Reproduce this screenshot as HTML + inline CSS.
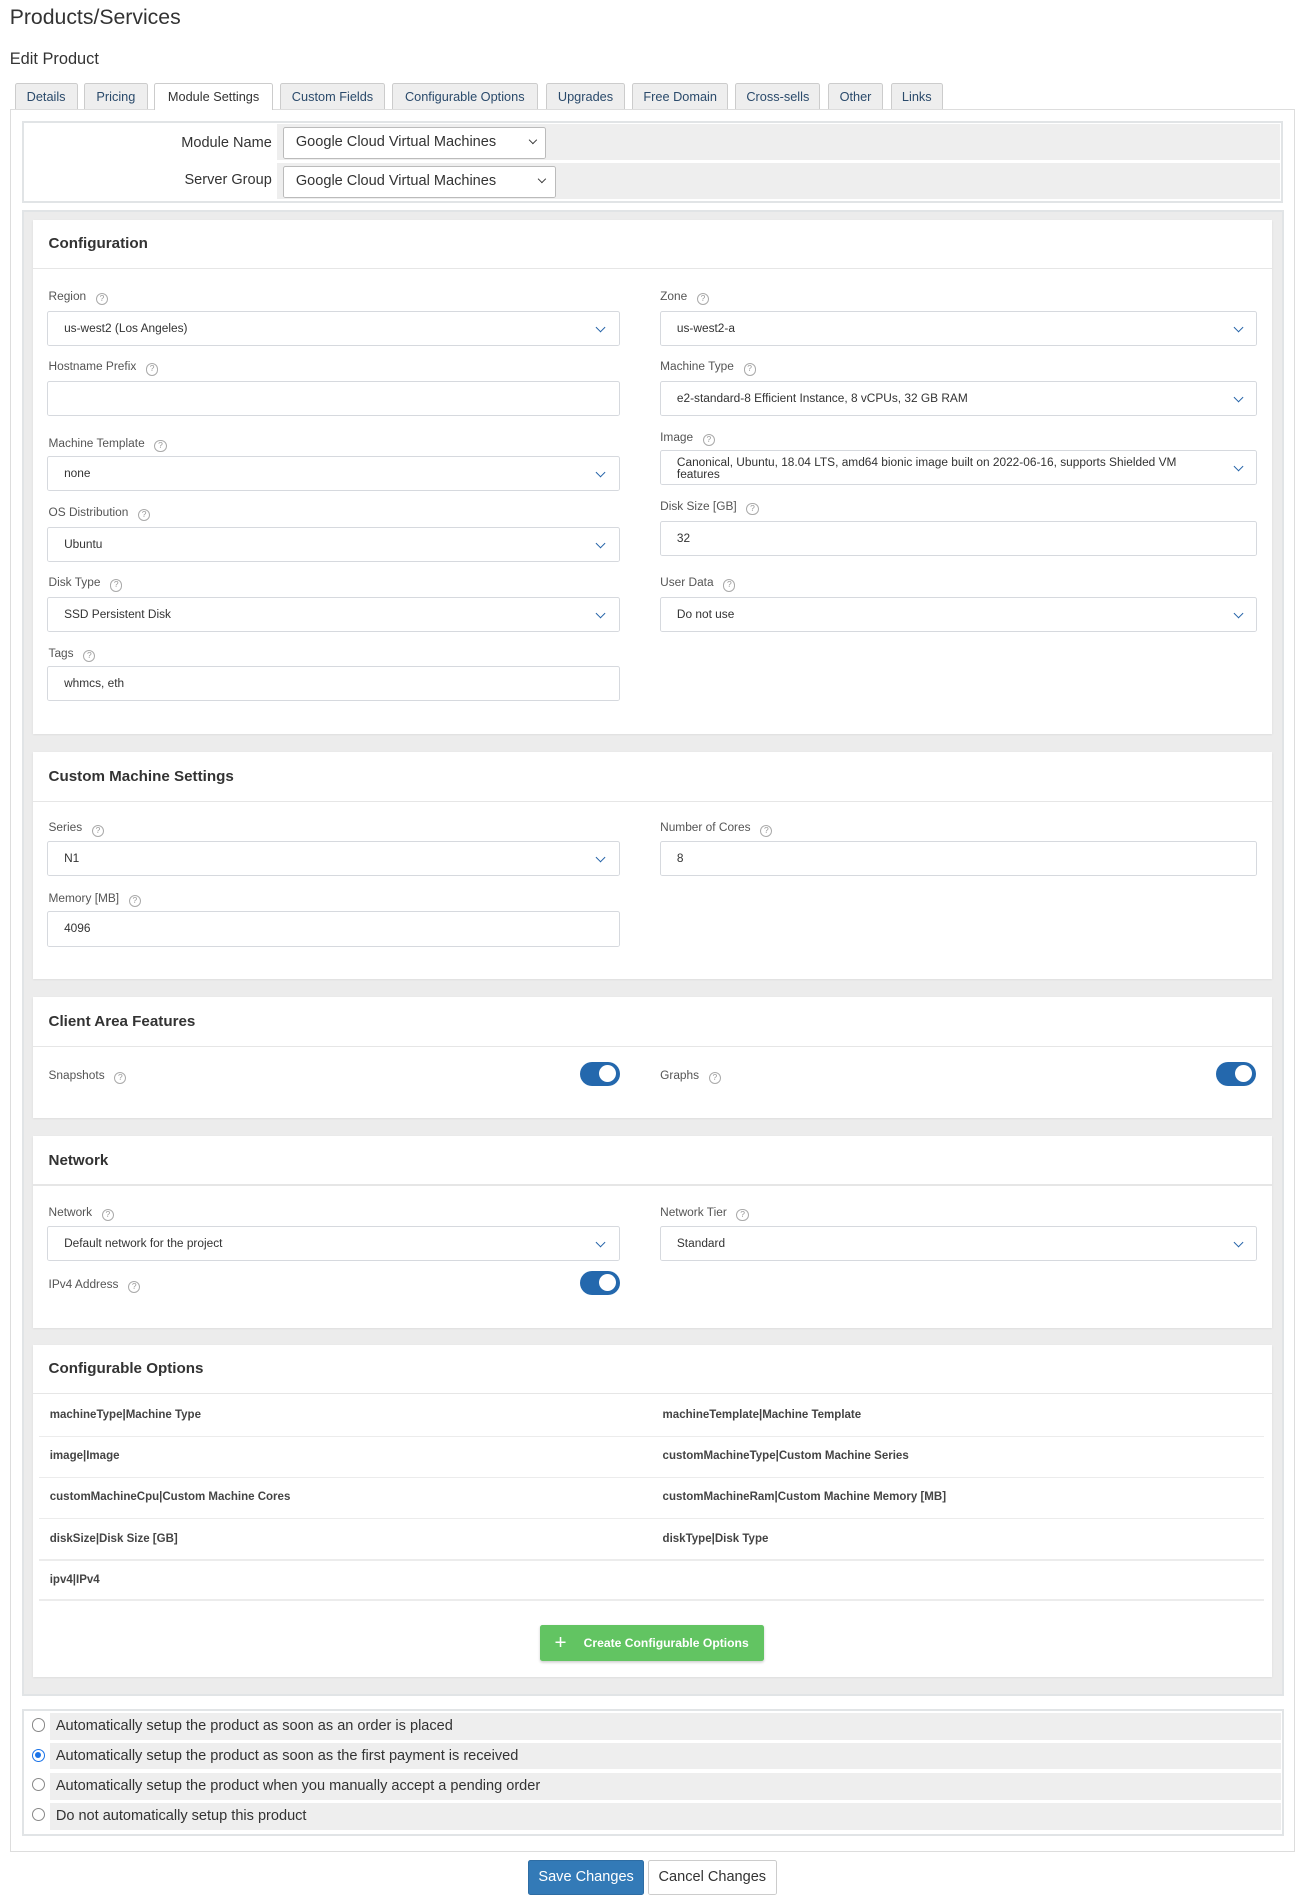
<!DOCTYPE html>
<html><head><meta charset="utf-8"><style>
*{box-sizing:border-box;margin:0;padding:0}
html,body{width:1306px;height:1902px;overflow:hidden;background:#fff}
#w{zoom:1.2135;position:relative;width:1080px;height:1573px;font-family:"Liberation Sans",sans-serif;color:#333}
.a{position:absolute}
.tab{position:absolute;top:68px;height:22px;border:1px solid #ccc;border-bottom:none;background:#eee;font-size:10.5px;color:#2a4a6b;text-align:center;line-height:21px;border-radius:2px 2px 0 0}
.tab.on{background:#fff;color:#333;height:23px}
.card{position:absolute;left:27px;width:1021px;background:#fff;box-shadow:0 1px 2px rgba(0,0,0,.08)}
.card h3{position:absolute;left:13px;font-size:12.5px;font-weight:bold;color:#333;top:13px}
.card .hr{position:absolute;left:0;right:0;height:1px;background:#e6e6e6;top:40px}
.lb{position:absolute;font-size:9.8px;color:#555;white-space:nowrap;margin-top:1px}
.q{display:inline-block;width:10px;height:10px;border:1px solid #aaa;border-radius:50%;font-size:7px;line-height:8px;text-align:center;color:#999;margin-left:8px;vertical-align:-1px}
.in{position:absolute;height:29px;border:1px solid #d6d9de;border-radius:2px;font-size:9.8px;color:#333;padding-left:13px;line-height:27px;white-space:nowrap}
.in.s::after{content:"";position:absolute;right:12px;top:10px;width:5px;height:5px;border-right:1.4px solid #2563a8;border-bottom:1.4px solid #2563a8;transform:rotate(45deg)}
.tg{position:absolute;width:33px;height:20px;border-radius:10px;background:#2468ad}
.tg::after{content:"";position:absolute;right:3px;top:3px;width:14px;height:14px;border-radius:50%;background:#fff}
.opt{position:absolute;font-size:9.5px;font-weight:bold;color:#444;margin-top:2px}
.ol{position:absolute;left:5px;width:1010px;height:1px;background:#ececec}
.rr{position:absolute;left:41px;width:1015px;height:22px;background:#eee;font-size:12px;color:#333;line-height:22px;padding-left:5px}
.rd{position:absolute;left:26px;width:11px;height:11px;border:1px solid #888;border-radius:50%;background:#fff}
.sel{position:absolute;height:26px;border:1px solid #bbb;background:#fff;font-size:12px;color:#333;line-height:24px;padding-left:10px;border-radius:2px}
.sel::after{content:"";position:absolute;right:8px;top:7px;width:4px;height:4px;border-right:1.5px solid #333;border-bottom:1.5px solid #333;transform:rotate(45deg)}
</style></head><body><div id="w">
<div class="a" style="left:8px;top:5px;font-size:17.5px;color:#333">Products/Services</div>
<div class="a" style="left:8px;top:41px;font-size:13.5px;color:#333">Edit Product</div>
<div class="a" style="left:8px;top:90px;width:1059px;height:1436px;border:1px solid #ddd"></div>
<div class="tab" style="left:12px;width:52px">Details</div>
<div class="tab" style="left:69px;width:53px">Pricing</div>
<div class="tab on" style="left:127px;width:98px">Module Settings</div>
<div class="tab" style="left:231px;width:86px">Custom Fields</div>
<div class="tab" style="left:323px;width:120px">Configurable Options</div>
<div class="tab" style="left:450px;width:65px">Upgrades</div>
<div class="tab" style="left:521px;width:79px">Free Domain</div>
<div class="tab" style="left:606px;width:70px">Cross-sells</div>
<div class="tab" style="left:682px;width:46px">Other</div>
<div class="tab" style="left:734px;width:43px">Links</div>

<div class="a" style="left:18px;top:100px;width:1039px;height:67px;border:2px solid #e1e4e6;background:#fff"></div>
<div class="a" style="left:228px;top:102px;width:827px;height:30px;background:#eee"></div>
<div class="a" style="left:228px;top:134px;width:827px;height:30px;background:#eee"></div>
<div class="a" style="left:20px;top:111px;width:204px;text-align:right;font-size:12px;color:#333">Module Name</div>
<div class="a" style="left:20px;top:142px;width:204px;text-align:right;font-size:12px;color:#333">Server Group</div>
<div class="sel" style="left:233px;top:105px;width:217px">Google Cloud Virtual Machines</div>
<div class="sel" style="left:233px;top:137px;width:225px">Google Cloud Virtual Machines</div>

<div class="a" style="left:18px;top:173px;width:1040px;height:1225px;background:#ececec;border:2px solid #e1e4e6"></div>

<div class="card" style="top:181px;height:424px">
<h3>Configuration</h3><div class="hr"></div>
<div class="lb" style="left:13px;top:56px">Region<span class="q">?</span></div>
<div class="in s" style="left:12px;top:75px;width:472px">us-west2 (Los Angeles)</div>
<div class="lb" style="left:13px;top:114px">Hostname Prefix<span class="q">?</span></div>
<div class="in" style="left:12px;top:133px;width:472px"></div>
<div class="lb" style="left:13px;top:177px">Machine Template<span class="q">?</span></div>
<div class="in s" style="left:12px;top:195px;width:472px">none</div>
<div class="lb" style="left:13px;top:234px">OS Distribution<span class="q">?</span></div>
<div class="in s" style="left:12px;top:253px;width:472px">Ubuntu</div>
<div class="lb" style="left:13px;top:292px">Disk Type<span class="q">?</span></div>
<div class="in s" style="left:12px;top:311px;width:472px">SSD Persistent Disk</div>
<div class="lb" style="left:13px;top:350px">Tags<span class="q">?</span></div>
<div class="in" style="left:12px;top:368px;width:472px">whmcs, eth</div>
<div class="lb" style="left:517px;top:56px">Zone<span class="q">?</span></div>
<div class="in s" style="left:517px;top:75px;width:492px">us-west2-a</div>
<div class="lb" style="left:517px;top:114px">Machine Type<span class="q">?</span></div>
<div class="in s" style="left:517px;top:133px;width:492px">e2-standard-8 Efficient Instance, 8 vCPUs, 32 GB RAM</div>
<div class="lb" style="left:517px;top:172px">Image<span class="q">?</span></div>
<div class="in s" style="left:517px;top:190px;width:492px;line-height:10px;padding-top:4px;white-space:normal;padding-right:50px">Canonical, Ubuntu, 18.04 LTS, amd64 bionic image built on 2022-06-16, supports Shielded VM features</div>
<div class="lb" style="left:517px;top:229px">Disk Size [GB]<span class="q">?</span></div>
<div class="in" style="left:517px;top:248px;width:492px">32</div>
<div class="lb" style="left:517px;top:292px">User Data<span class="q">?</span></div>
<div class="in s" style="left:517px;top:311px;width:492px">Do not use</div>
</div>

<div class="card" style="top:620px;height:187px">
<h3>Custom Machine Settings</h3><div class="hr"></div>
<div class="lb" style="left:13px;top:55px">Series<span class="q">?</span></div>
<div class="in s" style="left:12px;top:73px;width:472px">N1</div>
<div class="lb" style="left:13px;top:113px">Memory [MB]<span class="q">?</span></div>
<div class="in" style="left:12px;top:131px;width:472px">4096</div>
<div class="lb" style="left:517px;top:55px">Number of Cores<span class="q">?</span></div>
<div class="in" style="left:517px;top:73px;width:492px">8</div>
</div>

<div class="card" style="top:822px;height:99px">
<h3>Client Area Features</h3><div class="hr"></div>
<div class="lb" style="left:13px;top:57px">Snapshots<span class="q">?</span></div>
<div class="tg" style="left:451px;top:53px"></div>
<div class="lb" style="left:517px;top:57px">Graphs<span class="q">?</span></div>
<div class="tg" style="left:975px;top:53px"></div>
</div>

<div class="card" style="top:936px;height:158px">
<h3>Network</h3><div class="hr"></div>
<div class="lb" style="left:13px;top:56px">Network<span class="q">?</span></div>
<div class="in s" style="left:12px;top:74px;width:472px">Default network for the project</div>
<div class="lb" style="left:13px;top:115px">IPv4 Address<span class="q">?</span></div>
<div class="tg" style="left:451px;top:111px"></div>
<div class="lb" style="left:517px;top:56px">Network Tier<span class="q">?</span></div>
<div class="in s" style="left:517px;top:74px;width:492px">Standard</div>
</div>

<div class="card" style="top:1108px;height:274px">
<h3>Configurable Options</h3><div class="hr"></div>
<div class="opt" style="left:14px;top:51px">machineType|Machine Type</div>
<div class="opt" style="left:519px;top:51px">machineTemplate|Machine Template</div>
<div class="ol" style="top:75px"></div>
<div class="opt" style="left:14px;top:85px">image|Image</div>
<div class="opt" style="left:519px;top:85px">customMachineType|Custom Machine Series</div>
<div class="ol" style="top:109px"></div>
<div class="opt" style="left:14px;top:119px">customMachineCpu|Custom Machine Cores</div>
<div class="opt" style="left:519px;top:119px">customMachineRam|Custom Machine Memory [MB]</div>
<div class="ol" style="top:143px"></div>
<div class="opt" style="left:14px;top:153px">diskSize|Disk Size [GB]</div>
<div class="opt" style="left:519px;top:153px">diskType|Disk Type</div>
<div class="ol" style="top:177px"></div>
<div class="opt" style="left:14px;top:187px">ipv4|IPv4</div>
<div class="ol" style="top:210px"></div>
<div class="a" style="left:418px;top:231px;width:185px;height:30px;background:#62c462;border-radius:2px;box-shadow:0 1px 2px rgba(0,0,0,.2);color:#fff;font-size:10px;font-weight:bold;line-height:30px;padding-left:36px"><span style="position:absolute;left:12px;top:0;font-size:17px;font-weight:normal">+</span>Create Configurable Options</div>
</div>

<div class="a" style="left:18px;top:1408px;width:1040px;height:105px;border:2px solid #e1e4e6;background:#fff"></div>
<div class="rr" style="top:1412px">Automatically setup the product as soon as an order is placed</div>
<div class="rr" style="top:1436px">Automatically setup the product as soon as the first payment is received</div>
<div class="rr" style="top:1461px">Automatically setup the product when you manually accept a pending order</div>
<div class="rr" style="top:1486px">Do not automatically setup this product</div>
<div class="rd" style="top:1416px"></div>
<div class="rd" style="top:1441px;border-color:#1a73e8"><div style="position:absolute;left:2px;top:2px;width:5px;height:5px;border-radius:50%;background:#1a73e8"></div></div>
<div class="rd" style="top:1465px"></div>
<div class="rd" style="top:1490px"></div>

<div class="a" style="left:435px;top:1533px;width:96px;height:29px;background:#337ab7;border:1px solid #2e6da4;border-radius:2px;color:#fff;font-size:12px;line-height:27px;text-align:center">Save Changes</div>
<div class="a" style="left:534px;top:1533px;width:106px;height:29px;background:#fff;border:1px solid #ccc;border-radius:2px;color:#333;font-size:12px;line-height:27px;text-align:center">Cancel Changes</div>
</div></body></html>
